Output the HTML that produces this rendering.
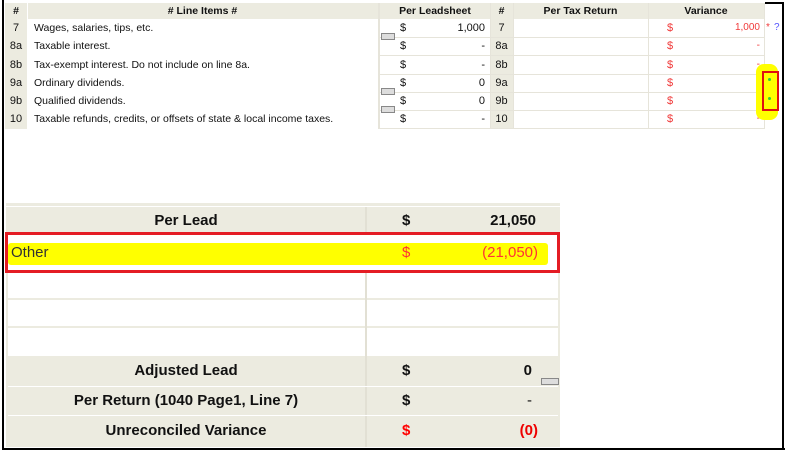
<!DOCTYPE html>
<html><head><style>
body{margin:0;width:787px;height:452px;background:#fff;position:relative;overflow:hidden;font-family:"Liberation Sans",sans-serif;}
.a{position:absolute;}
.t{font-size:11px;color:#111;line-height:18px;white-space:nowrap;}
.hd{background:#ecebe0;}
.b{font-family:"Liberation Sans",sans-serif;font-weight:bold;font-size:15px;color:#111;}
.r{color:#f03a3a;}
.box{position:absolute;width:12px;height:5px;border:1px solid #888;background:#ddd;}
</style></head><body>
<!-- frame -->
<div class="a" style="left:2px;top:0;width:2px;height:450px;background:#000"></div>
<div class="a" style="left:2px;top:448px;width:783px;height:2px;background:#000"></div>
<div class="a" style="left:782px;top:3px;width:2px;height:447px;background:#000"></div>
<div class="a" style="left:765px;top:2px;width:19px;height:2px;background:#000"></div>

<!-- top table header -->
<div class="a hd" style="left:5px;top:3px;width:760px;height:16px"></div>
<div class="a hd" style="left:5px;top:19px;width:22px;height:110px"></div>
<div class="a hd" style="left:490px;top:19px;width:23px;height:110px"></div>
<div class="a" style="left:27px;top:3px;width:1px;height:16px;background:#fff"></div>
<div class="a" style="left:378px;top:3px;width:2px;height:126px;background:#e6e4da"></div>
<div class="a" style="left:490px;top:3px;width:1px;height:126px;background:#e6e4da"></div>
<div class="a" style="left:513px;top:3px;width:1px;height:126px;background:#e6e4da"></div>
<div class="a" style="left:648px;top:3px;width:1px;height:126px;background:#e6e4da"></div>
<div class="a" style="left:764px;top:3px;width:1px;height:126px;background:#e6e4da"></div>
<div class="a" style="left:380px;top:37px;width:385px;height:1px;background:#e6e4da"></div>
<div class="a" style="left:380px;top:55px;width:385px;height:1px;background:#e6e4da"></div>
<div class="a" style="left:380px;top:74px;width:385px;height:1px;background:#e6e4da"></div>
<div class="a" style="left:380px;top:92px;width:385px;height:1px;background:#e6e4da"></div>
<div class="a" style="left:380px;top:110px;width:385px;height:1px;background:#e6e4da"></div>
<div class="a" style="left:380px;top:128px;width:385px;height:1px;background:#e6e4da"></div>

<div class="a t" style="left:5px;top:2px;width:22px;text-align:center;font-weight:bold;font-size:10.5px">#</div>
<div class="a t" style="left:27px;top:2px;width:351px;text-align:center;font-weight:bold;font-size:10.5px"># Line Items #</div>
<div class="a t" style="left:380px;top:2px;width:110px;text-align:center;font-weight:bold;font-size:10.5px">Per Leadsheet</div>
<div class="a t" style="left:490px;top:2px;width:23px;text-align:center;font-weight:bold;font-size:10.5px">#</div>
<div class="a t" style="left:513px;top:2px;width:135px;text-align:center;font-weight:bold;font-size:10.5px">Per Tax Return</div>
<div class="a t" style="left:648px;top:2px;width:116px;text-align:center;font-weight:bold;font-size:10.5px">Variance</div>

<div class="a t" style="left:5px;top:19px;width:22px;text-align:center;line-height:18.3px">7<br>8a<br>8b<br>9a<br>9b<br>10</div>
<div class="a t" style="left:34px;top:19px;line-height:18.3px;font-size:10.5px">Wages, salaries, tips, etc.<br>Taxable interest.<br>Tax-exempt interest. Do not include on line 8a.<br>Ordinary dividends.<br>Qualified dividends.<br>Taxable refunds, credits, or offsets of state &amp; local income taxes.</div>
<div class="a t" style="left:400px;top:19px;line-height:18.3px">$<br>$<br>$<br>$<br>$<br>$</div>
<div class="a t" style="left:420px;top:19px;width:65px;text-align:right;line-height:18.3px">1,000<br>-<br>-<br>0<br>0<br>-</div>
<div class="a t" style="left:490px;top:19px;width:23px;text-align:center;line-height:18.3px">7<br>8a<br>8b<br>9a<br>9b<br>10</div>
<div class="a t r" style="left:667px;top:19px;line-height:18.3px">$<br>$<br>$<br>$<br>$<br>$</div>
<div class="a t r" style="left:700px;top:19px;width:60px;text-align:right;line-height:18.3px;font-size:10px">1,000<br>-<br>-<br>-<br>-<br>-</div>
<div class="a t r" style="left:766px;top:19px;font-size:10px">*</div>
<div class="a t" style="left:774px;top:19px;font-size:10px;color:#55f">?</div>
<div class="box" style="left:381px;top:33px"></div>
<div class="box" style="left:381px;top:88px"></div>
<div class="box" style="left:381px;top:106px"></div>
<div class="a" style="left:756px;top:64px;width:22px;height:56px;background:#ffff00;border-radius:8px"></div>
<div class="a" style="left:762px;top:71px;width:13px;height:36px;border:2px solid #e01010"></div>
<div class="a" style="left:768px;top:78px;width:3px;height:3px;background:#3c3;border-radius:50%"></div>
<div class="a" style="left:768px;top:97px;width:3px;height:3px;background:#3c3;border-radius:50%"></div>

<!-- bottom table -->
<div class="a" style="left:6px;top:203px;width:554px;height:244px;background:#ecebe0"></div>
<div class="a" style="left:8px;top:272px;width:550px;height:84px;background:#fff"></div>
<div class="a" style="left:8px;top:298px;width:550px;height:2px;background:#ecebe0"></div>
<div class="a" style="left:8px;top:326px;width:550px;height:2px;background:#ecebe0"></div>
<div class="a" style="left:365px;top:207px;width:2px;height:240px;background:#e2e0d4"></div>
<div class="a" style="left:8px;top:386px;width:550px;height:1px;background:#fff"></div>
<div class="a" style="left:8px;top:415px;width:550px;height:1px;background:#fff"></div>
<div class="a" style="left:6px;top:206px;width:554px;height:1px;background:#fff"></div>
<div class="a" style="left:8px;top:234px;width:550px;height:36px;background:#fff"></div>
<div class="a" style="left:8px;top:243px;width:540px;height:22px;background:#ffff00;border-radius:3px"></div>
<div class="a" style="left:5px;top:232px;width:549px;height:35px;border:3px solid #e41c24"></div>

<div class="a b" style="left:6px;top:212px;width:360px;text-align:center">Per Lead</div>
<div class="a b" style="left:402px;top:212px">$</div>
<div class="a b" style="left:450px;top:212px;width:86px;text-align:right">21,050</div>
<div class="a" style="left:11px;top:244px;font-size:15px;color:#333">Other</div>
<div class="a b r" style="left:402px;top:244px;font-weight:normal;color:#f33">$</div>
<div class="a b" style="left:440px;top:244px;width:98px;text-align:right;font-weight:normal;color:#f33">(21,050)</div>

<div class="a b" style="left:6px;top:362px;width:360px;text-align:center">Adjusted Lead</div>
<div class="a b" style="left:402px;top:362px">$</div>
<div class="a b" style="left:450px;top:362px;width:82px;text-align:right">0</div>
<div class="box" style="left:541px;top:378px;width:16px"></div>
<div class="a b" style="left:6px;top:392px;width:360px;text-align:center">Per Return (1040 Page1, Line 7)</div>
<div class="a b" style="left:402px;top:392px">$</div>
<div class="a b" style="left:450px;top:392px;width:82px;text-align:right;font-weight:normal">-</div>
<div class="a b" style="left:6px;top:422px;width:360px;text-align:center">Unreconciled Variance</div>
<div class="a b r" style="left:402px;top:422px;color:#f00">$</div>
<div class="a b r" style="left:450px;top:422px;width:88px;text-align:right;color:#e00">(0)</div>
</body></html>
